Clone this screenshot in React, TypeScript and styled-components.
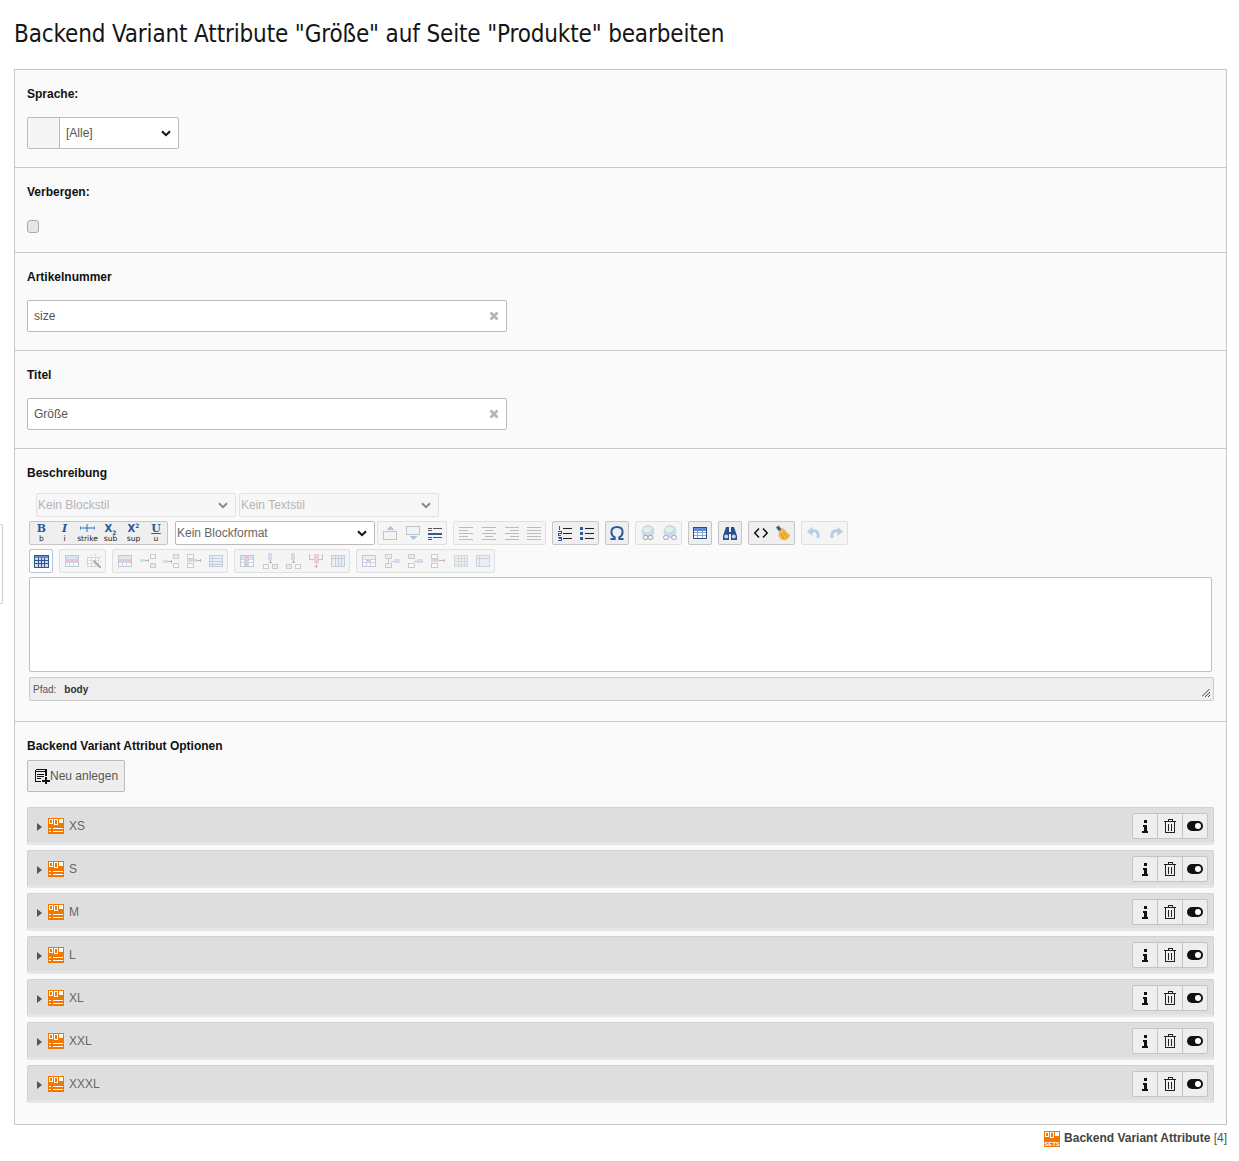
import React from "react";
import styled, { createGlobalStyle } from "styled-components";

const GlobalStyle = createGlobalStyle`
  html, body { margin: 0; padding: 0; background: #fff; }
  body { font-family: "Liberation Sans", Arial, sans-serif; font-size: 12px; color: #333; }
`;

const chevron = (color: string) =>
  `url("data:image/svg+xml,%3Csvg xmlns='http://www.w3.org/2000/svg' width='10' height='7'%3E%3Cpath d='M1 1.2l4 4 4-4' fill='none' stroke='%23${color}' stroke-width='2'/%3E%3C/svg%3E")`;

const Page = styled.div`
  position: relative;
  height: 1161px;
  padding: 0 12px 0 14px;
  box-sizing: border-box;
`;

const SideTab = styled.div`
  position: absolute;
  left: 0;
  top: 524px;
  width: 3px;
  height: 80px;
  background: #fff;
  border: 1px solid #ccc;
  border-left: 0;
  border-radius: 0 2px 2px 0;
  box-sizing: border-box;
`;

const Title = styled.h1`
  margin: 0;
  height: 69px;
  font-family: "DejaVu Sans Condensed", "Liberation Sans", sans-serif;
  font-weight: 400;
  font-size: 24px;
  line-height: 69px;
  letter-spacing: -0.14px;
  color: #151515;
  white-space: nowrap;
`;

const Panel = styled.div`
  border: 1px solid #c8c8c8;
  background: #fafafa;
  height: 1056px;
  box-sizing: border-box;
`;

const Section = styled.section<{ $last?: boolean }>`
  padding: 16px 12px 18px;
  border-bottom: ${(p) => (p.$last ? "0" : "1px solid #c8c8c8")};
`;

const Label = styled.label<{ $gap?: number }>`
  display: block;
  font-weight: 700;
  line-height: 16px;
  color: #111;
  margin-bottom: ${(p) => p.$gap ?? 15}px;
`;

const LangField = styled.div`
  display: flex;
  width: 152px;
  height: 32px;
  border: 1px solid #bbb;
  border-radius: 2px;
  box-sizing: border-box;
  background: #fff;
`;

const LangFlag = styled.div`
  width: 31px;
  background: #f5f5f5;
  border-right: 1px solid #bbb;
`;

const LangSelect = styled.select`
  flex: 1;
  min-width: 0;
  border: 0;
  outline: 0;
  appearance: none;
  background: ${chevron("111")} no-repeat right 7px center;
  font: 12px "Liberation Sans", sans-serif;
  color: #555;
  padding-left: 6px;
`;

const CheckRow = styled.div`
  height: 19px;
  padding-top: 5px;
  box-sizing: border-box;
`;

const Check = styled.input`
  display: block;
  appearance: none;
  width: 12px;
  height: 13px;
  margin: 0;
  box-sizing: border-box;
  background: #e6e6e6;
  border: 1px solid #aaa;
  border-radius: 3px;
`;

const TextField = styled.div`
  position: relative;
  width: 480px;
  height: 32px;
  border: 1px solid #bbb;
  border-radius: 2px;
  box-sizing: border-box;
  background: #fff;
  display: flex;
  align-items: center;
  padding: 0 6px;
  color: #555;
`;

const Clear = styled.svg`
  position: absolute;
  right: 7px;
  top: 10px;
`;

const Editor = styled.div`
  margin-top: -3px;
  padding-bottom: 2px;
`;

const StyleRow = styled.div`
  display: flex;
  gap: 3px;
  padding-left: 9px;
  margin-bottom: 4px;
`;

const StyleSelect = styled.select`
  appearance: none;
  width: 200px;
  height: 24px;
  box-sizing: border-box;
  border: 1px solid #e3e3e3;
  border-radius: 2px;
  background: #f7f7f7 ${chevron("888")} no-repeat right 7px center;
  color: #b5b5b5;
  font: 12px "Liberation Sans", sans-serif;
  padding: 0 0 0 1px;
  opacity: 1;
`;

const FormatSelect = styled(StyleSelect)`
  border-color: #bbb;
  background: #fff ${chevron("111")} no-repeat right 7px center;
  color: #666;
  margin: 0 -4px 0 1px;
`;

const ToolRow = styled.div`
  display: flex;
  gap: 6px;
  padding-left: 2px;
  margin-bottom: 4px;
`;

const Group = styled.div<{ $faded?: boolean; $active?: boolean }>`
  display: flex;
  height: 24px;
  box-sizing: border-box;
  border: 1px solid ${(p) => (p.$active ? "#b9c4d6" : p.$faded ? "#e0e0e0" : "#c6c6c6")};
  border-radius: 2px;
  background: ${(p) => (p.$active ? "#fff" : p.$faded ? "#f5f5f5" : "#efefef")};
  & > *:last-child {
    width: 22px;
  }
`;

const Tool = styled.div<{ $dim?: boolean }>`
  width: 23px;
  box-sizing: border-box;
  display: flex;
  align-items: center;
  justify-content: center;
  & > svg {
    opacity: ${(p) => (p.$dim ? 0.45 : 1)};
  }
`;

const TextTool = styled.div`
  width: 23px;
  display: flex;
  flex-direction: column;
  align-items: center;
`;

const TextToolMark = styled.span`
  font: 700 11px/13px "DejaVu Serif", serif;
  color: #2a5a98;
  height: 13px;
  white-space: nowrap;
`;

const TextToolItalic = styled(TextToolMark)`
  font-style: italic;
`;

const TextToolUnder = styled(TextToolMark)`
  text-decoration: underline;
`;

const TextToolLetter = styled(TextToolMark)`
  font-family: "DejaVu Sans", sans-serif;
  font-size: 10px;
  sub, sup {
    font-size: 6px;
    line-height: 0;
  }
`;

const StrikeMark = styled.svg`
  display: block;
  margin-bottom: 3px;
  margin-top: 2px;
`;

const TextToolName = styled.span`
  font: 7.5px/8px "DejaVu Sans", sans-serif;
  color: #222;
`;

const EditArea = styled.div`
  margin-left: 2px;
  width: 1183px;
  height: 95px;
  border: 1px solid #c0c0c0;
  border-radius: 2px;
  background: #fff;
  box-sizing: border-box;
`;

const PathBar = styled.div`
  position: relative;
  margin: 5px 0 0 2px;
  width: 1185px;
  height: 24px;
  border: 1px solid #ccc;
  border-radius: 2px;
  background: #eee;
  box-sizing: border-box;
  display: flex;
  align-items: center;
  gap: 8px;
  padding-left: 3px;
  font-size: 10px;
  color: #555;
  b { color: #333; }
`;

const Grip = styled.svg`
  position: absolute;
  right: 3px;
  bottom: 3px;
`;

const NewButton = styled.button`
  display: flex;
  align-items: center;
  height: 32px;
  width: 98px;
  padding: 0 0 0 6px;
  border: 1px solid #bbb;
  border-radius: 2px;
  background: #eee;
  font: 12px "Liberation Sans", sans-serif;
  color: #555;
  margin-bottom: 15px;
`;

const Rows = styled.div`
  display: flex;
  flex-direction: column;
  gap: 5px;
`;

const Row = styled.div`
  height: 38px;
  box-sizing: border-box;
  display: flex;
  align-items: center;
  background: #dedede;
  border: 1px solid #d2d2d2;
  border-bottom: 3px solid #e6e6e6;
  border-radius: 2px;
  padding: 1px 5px 0 7px;
  color: #666;
`;

const Caret = styled.span`
  width: 0;
  height: 0;
  border-left: 5px solid #555;
  border-top: 4px solid transparent;
  border-bottom: 4px solid transparent;
  margin: 2px 6px 0 2px;
`;

const RowName = styled.span`
  margin-left: 5px;
  flex: 1;
`;

const Actions = styled.div`
  display: flex;
  height: 26px;
  box-sizing: border-box;
  border: 1px solid #c4c4c4;
  border-radius: 2px;
  background: #eee;
`;

const Action = styled.div`
  width: 24px;
  display: flex;
  align-items: center;
  justify-content: center;
  & + & { border-left: 1px solid #c4c4c4; }
`;

const Footer = styled.div`
  display: flex;
  justify-content: flex-end;
  align-items: center;
  gap: 4px;
  height: 16px;
  margin-top: 6px;
  color: #555;
  b { color: #444; }
`;

const FooterText = styled.span`
  margin-bottom: 2px;
`;

const BLUE = "#2c5a9a";

const Sv = ({ children }: { children: React.ReactNode }) => (
  <svg width={16} height={16} viewBox="0 0 16 16" fill="none" shapeRendering="crispEdges">
    {children}
  </svg>
);

const Grid = ({ pink, head = "#b9cdea" }: { pink?: string; head?: string }) => (
  <>
    <rect x="1.5" y="2.5" width="13" height="11" fill="#fff" stroke="#7c95b8" />
    <rect x="2" y="3" width="12" height="3" fill={head} />
    {pink === "cell" && <rect x="6" y="6" width="4" height="4" fill="#e58a9a" />}
    {pink === "row" && <rect x="2" y="7" width="12" height="3" fill="#e58a9a" />}
    {pink === "col" && <rect x="6" y="3" width="4" height="10" fill="#e58a9a" />}
    <path d="M2 6.5h12M2 9.5h12M5.5 6v7M9.5 6v7" stroke="#9fb2cc" />
  </>
);

const Globe = ({ gap }: { gap: number }) => (
  <g shapeRendering="auto">
    <circle cx="8" cy="6.5" r="6.5" fill="#8fbde0" />
    <path d="M3 4.5c2-3 6-3 8-1.5 1 3-2 5-6 4z" fill="#d8ecd0" />
    <rect x={3 - gap} y="10.5" width="5" height="4" rx="2" fill="#f5f5f5" stroke="#444" />
    <rect x={8 + gap} y="10.5" width="5" height="4" rx="2" fill="#f5f5f5" stroke="#444" />
  </g>
);

const icons: Record<string, React.ReactNode> = {
  blockUp: (<><rect x="1.5" y="6.5" width="13" height="8" fill="#f2f2f2" stroke="#888" /><path d="M8 1l4 4H4z" fill="#5a8ac6" /></>),
  blockDown: (<><rect x="1.5" y="1.5" width="13" height="8" fill="#f2f2f2" stroke="#888" /><path d="M8 15l4-4H4z" fill="#5a8ac6" /></>),
  lineHeight: (<><path d="M1 3.5h4M1 5.5h4M6 3.5h9M1 12.5h4M1 14.5h4M6 12.5h9" stroke="#555" /><rect x="1" y="7.5" width="14" height="2" fill="#2c5a9a" /></>),
  left: <path d="M1 2.5h14M1 5.5h9M1 8.5h14M1 11.5h9M1 14.5h14" stroke="#777" />,
  center: <path d="M1 2.5h14M4 5.5h8M1 8.5h14M4 11.5h8M1 14.5h14" stroke="#777" />,
  right: <path d="M1 2.5h14M6 5.5h9M1 8.5h14M6 11.5h9M1 14.5h14" stroke="#777" />,
  justify: <path d="M1 2.5h14M1 5.5h14M1 8.5h14M1 11.5h14M1 14.5h14" stroke="#777" />,
  ol: (<><path d="M6 3.5h9M6 8.5h9M6 13.5h9" stroke="#222" /><path d="M2.5 1v4M1 6.5h3V8H1v2.5h3M1 12h3v3.5H1M2 13.5h2" stroke="#2c5a9a" /></>),
  ul: (<><path d="M6 3.5h9M6 8.5h9M6 13.5h9" stroke="#222" /><rect x="1" y="2" width="3" height="3" fill="#2c5a9a" /><rect x="1" y="7" width="3" height="3" fill="#2c5a9a" /><rect x="1" y="12" width="3" height="3" fill="#2c5a9a" /></>),
  omega: <path d="M1.5 14h4.2v-1.6C3.5 11.2 2.4 9.2 2.4 7c0-3.2 2.4-5 5.6-5s5.6 1.8 5.6 5c0 2.2-1.1 4.2-3.3 5.4V14h4.2" stroke={BLUE} strokeWidth="2" shapeRendering="auto" />,
  link: <Globe gap={0} />,
  unlink: <Globe gap={1.5} />,
  table: (<><rect x="1.5" y="2.5" width="13" height="11" fill="#fff" stroke="#2f4f82" /><rect x="2" y="3" width="12" height="2.5" fill="#5f8bd0" /><path d="M2 7.5h12M2 10.5h12M5.5 6v7M10.5 6v7" stroke="#8ea6c8" /></>),
  find: (<g shapeRendering="auto"><path d="M3 5l1-3h3v5h2V2h3l1 3 2 6v4H9V9H7v6H1v-4z" fill="#27508c" /><circle cx="4.2" cy="11.5" r="2" fill="#c6d8ee" /><circle cx="11.8" cy="11.5" r="2" fill="#c6d8ee" /></g>),
  code: <path d="M6 3.5L1.8 8 6 12.5M10 3.5L14.2 8 10 12.5" stroke="#111" strokeWidth="1.5" shapeRendering="auto" />,
  clean: (<g shapeRendering="auto"><path d="M1 2.5L3.5.5l3.5 4L4.5 7z" fill="#3f5f8e" /><path d="M4 6l4-3 7.5 7.5L11 15.5 6 14.5 3.5 11z" fill="#f2b84a" /><path d="M6 9l3 5M8.5 7.5l4 5" stroke="#c98a1c" /></g>),
  undo: (<g shapeRendering="auto"><path d="M5 6.5c4-2 8-.5 7 6.5" stroke="#6f9ed0" strokeWidth="3" /><path d="M1 6.5L6.5 2v9z" fill="#6f9ed0" /></g>),
  redo: (<g shapeRendering="auto"><path d="M11 6.5c-4-2-8-.5-7 6.5" stroke="#6f9ed0" strokeWidth="3" /><path d="M15 6.5L9.5 2v9z" fill="#6f9ed0" /></g>),
  tableActive: (<><rect x="1.5" y="2.5" width="14" height="12" fill="#cfdcf0" stroke="#33568c" /><rect x="2" y="3" width="13" height="2" fill="#5f8bd0" /><path d="M2 7.5h13M2 10.5h13M5.5 5v9M8.5 5v9M11.5 5v9" stroke="#33568c" /></>),
  tableProps: <Grid pink="row" />,
  wand: (<><rect x="1.5" y="4.5" width="11" height="9" fill="#fff" stroke="#aaa" /><path d="M2 7.5h10M2 10.5h10M5.5 5v8M9.5 5v8" stroke="#bbb" /><path d="M8 8l7 7" stroke="#555" strokeWidth="2" /><path d="M9 1h1v2H9zM14 3h1v2h-1zM5 2h1v1H5zM14 8h1v1h-1z" fill="#e8a020" /></>),
  rowProps: <Grid pink="row" head="#d8d8d8" />,
  rowBefore: (<><rect x="10.5" y="1.5" width="5" height="4" fill="#fff" stroke="#999" /><rect x="10.5" y="10.5" width="5" height="4" fill="#ddd" stroke="#999" /><rect x="0" y="6" width="5" height="3" fill="#a9c2e2" /><path d="M5 7.5h4M8 6v3" stroke="#666" /></>),
  rowAfter: (<><rect x="10.5" y="1.5" width="5" height="4" fill="#ddd" stroke="#999" /><rect x="10.5" y="10.5" width="5" height="4" fill="#fff" stroke="#999" /><rect x="0" y="7" width="5" height="3" fill="#a9c2e2" /><path d="M5 8.5h4M8 7v3" stroke="#666" /></>),
  rowDelete: (<><rect x="1.5" y="1.5" width="6" height="4" fill="#fff" stroke="#999" /><rect x="1.5" y="10.5" width="6" height="4" fill="#fff" stroke="#999" /><rect x="1" y="6" width="10" height="3" fill="#e5a0ae" /><path d="M11 7.5h4M14 6v3" stroke="#666" /></>),
  rows: (<><rect x="1.5" y="2.5" width="13" height="11" fill="#dbe6f4" stroke="#8aa2c4" /><path d="M2 5.5h12M2 8.5h12M2 11.5h12M4.5 3v10" stroke="#8aa2c4" /></>),
  colProps: <Grid pink="col" />,
  colBefore: (<><rect x="6" y="0" width="4" height="7" fill="#a9c2e2" /><path d="M8 7v3M6.5 9h3" stroke="#666" /><rect x="1.5" y="11.5" width="5" height="4" fill="#fff" stroke="#999" /><rect x="10.5" y="11.5" width="5" height="4" fill="#ddd" stroke="#999" /></>),
  colAfter: (<><rect x="6" y="0" width="4" height="7" fill="#a9c2e2" /><path d="M8 7v3M6.5 9h3" stroke="#666" /><rect x="1.5" y="11.5" width="5" height="4" fill="#ddd" stroke="#999" /><rect x="10.5" y="11.5" width="5" height="4" fill="#fff" stroke="#999" /></>),
  colDelete: (<><rect x="5.5" y="1" width="5" height="9" fill="#e5a0ae" /><path d="M1.5 1v5h4M14.5 1v5h-4M8 10v5M6 13h4" stroke="#888" /></>),
  cols: (<><rect x="1.5" y="2.5" width="13" height="11" fill="#dbe6f4" stroke="#8aa2c4" /><path d="M5.5 3v10M8.5 3v10M11.5 3v10M2 5.5h12" stroke="#8aa2c4" /></>),
  cell: <Grid pink="cell" head="#e6e6e6" />,
  split: (<><rect x="1.5" y="1.5" width="6" height="4" fill="#eee" stroke="#999" /><rect x="1.5" y="10.5" width="6" height="4" fill="#eee" stroke="#999" /><path d="M4 6v4M7 8h3" stroke="#888" /><rect x="10" y="6" width="6" height="4" fill="#a9c2e2" /></>),
  merge: (<><rect x="1.5" y="1.5" width="6" height="4" fill="#ddd" stroke="#999" /><rect x="1.5" y="10.5" width="6" height="4" fill="#fff" stroke="#999" /><path d="M7 8h3" stroke="#888" /><rect x="10" y="6" width="6" height="4" fill="#a9c2e2" /></>),
  cellDelete: (<><rect x="1.5" y="1.5" width="6" height="4" fill="#fff" stroke="#999" /><rect x="1.5" y="10.5" width="6" height="4" fill="#fff" stroke="#999" /><rect x="1" y="6" width="8" height="3" fill="#e5a0ae" /><path d="M9 7.5h6M14 6v3" stroke="#777" /></>),
  plainGrid: (<><rect x="1.5" y="2.5" width="13" height="11" fill="#eee" stroke="#9bb" /><path d="M2 5.5h12M2 8.5h12M2 11.5h12M5.5 3v10M8.5 3v10M11.5 3v10" stroke="#a8b8cc" /></>),
  cellFill: (<><rect x="1.5" y="2.5" width="13" height="11" fill="#dbe6f4" stroke="#9ab0cc" /><path d="M2 5.5h12M4.5 3v10" stroke="#9ab0cc" /></>),
};

const ToolGroup = ({ names, faded, active, bright }: { names: string[]; faded?: boolean; active?: boolean; bright?: string }) => (
  <Group $faded={faded} $active={active}>
    {names.map((n) => (
      <Tool key={n} $dim={faded && n !== bright}>
        <Sv>{icons[n]}</Sv>
      </Tool>
    ))}
  </Group>
);

const SetIcon = ({ sets }: { sets?: boolean }) => (
  <Sv>
    <rect width="16" height="16" fill="#f07800" />
    <rect x="1.5" y="1.5" width="3" height="4" fill="#f07800" stroke="#fff" />
    <rect x="6.5" y="1.5" width="3" height="5" fill="#f07800" stroke="#fff" />
    <rect x="11" y="1" width="4" height="4" fill="#fff" />
    {sets ? (
      <text x="8" y="14.5" textAnchor="middle" fontSize="6" fontWeight="700" fill="#fff" fontFamily="Liberation Sans, sans-serif">SETS</text>
    ) : (
      <path d="M1 10.5h2M1 13.5h2M5 10.5h10M5 13.5h10" stroke="#fff" strokeWidth="1.4" />
    )}
  </Sv>
);

const InfoIcon = () => (
  <Sv>
    <rect x="6.5" y="2" width="3" height="3" fill="#111" />
    <path d="M5.5 7h4v6H11v2H5v-2h1.5V9h-1z" fill="#111" />
  </Sv>
);

const TrashIcon = () => (
  <Sv>
    <path d="M2 3.5h12M6 3.5v-2h4v2M3.5 3.5v11h9v-11M6.5 6v6.5M9.5 6v6.5" stroke="#222" />
  </Sv>
);

const ToggleIcon = () => (
  <svg width="16" height="10" viewBox="0 0 16 10">
    <rect width="16" height="10" rx="5" fill="#111" />
    <circle cx="11" cy="5" r="3" fill="#fff" />
  </svg>
);

const NewIcon = () => (
  <Sv>
    <path d="M1.5 1.5H12v6M1.5 1.5v12h5" stroke="#111" strokeWidth="1.4" />
    <path d="M1.5 3.5H12M3 6.5h7M3 8.5h7M3 10.5h4" stroke="#111" />
    <path d="M8 12.5h8M12 8.500v7" stroke="#111" strokeWidth="2" />
  </Sv>
);

const ClearIcon = () => (
  <Clear width="10" height="10" viewBox="0 0 10 10">
    <path d="M1.5 1.5l7 7M8.5 1.5l-7 7" stroke="#b5b5b5" strokeWidth="2.8" />
  </Clear>
);

const options = ["XS", "S", "M", "L", "XL", "XXL", "XXXL"];

export default function App() {
  return (
    <Page>
      <GlobalStyle />
      <SideTab />
      <Title>Backend Variant Attribute "Größe" auf Seite "Produkte" bearbeiten</Title>
      <Panel>
        <Section>
          <Label>Sprache:</Label>
          <LangField>
            <LangFlag />
            <LangSelect defaultValue="all">
              <option value="all">[Alle]</option>
            </LangSelect>
          </LangField>
        </Section>
        <Section>
          <Label>Verbergen:</Label>
          <CheckRow>
            <Check type="checkbox" />
          </CheckRow>
        </Section>
        <Section>
          <Label>Artikelnummer</Label>
          <TextField>
            size
            <ClearIcon />
          </TextField>
        </Section>
        <Section>
          <Label>Titel</Label>
          <TextField>
            Größe
            <ClearIcon />
          </TextField>
        </Section>
        <Section>
          <Label>Beschreibung</Label>
          <Editor>
            <StyleRow>
              <StyleSelect disabled>
                <option>Kein Blockstil</option>
              </StyleSelect>
              <StyleSelect disabled>
                <option>Kein Textstil</option>
              </StyleSelect>
            </StyleRow>
            <ToolRow>
              <Group>
                <TextTool>
                  <TextToolMark>B</TextToolMark>
                  <TextToolName>b</TextToolName>
                </TextTool>
                <TextTool>
                  <TextToolItalic>I</TextToolItalic>
                  <TextToolName>i</TextToolName>
                </TextTool>
                <TextTool>
                  <StrikeMark width="15" height="8" viewBox="0 0 15 8">
                    <path d="M0 4h15M0 2v4M15 2v4M7 0v8" stroke="#2a6fb8" fill="none" />
                  </StrikeMark>
                  <TextToolName>strike</TextToolName>
                </TextTool>
                <TextTool>
                  <TextToolLetter>X<sub>2</sub></TextToolLetter>
                  <TextToolName>sub</TextToolName>
                </TextTool>
                <TextTool>
                  <TextToolLetter>X<sup>2</sup></TextToolLetter>
                  <TextToolName>sup</TextToolName>
                </TextTool>
                <TextTool>
                  <TextToolUnder>U</TextToolUnder>
                  <TextToolName>u</TextToolName>
                </TextTool>
              </Group>
              <FormatSelect>
                <option>Kein Blockformat</option>
              </FormatSelect>
              <ToolGroup faded bright="lineHeight" names={["blockUp", "blockDown", "lineHeight"]} />
              <ToolGroup faded names={["left", "center", "right", "justify"]} />
              <ToolGroup names={["ol", "ul"]} />
              <ToolGroup names={["omega"]} />
              <ToolGroup faded names={["link", "unlink"]} />
              <ToolGroup names={["table"]} />
              <ToolGroup names={["find"]} />
              <ToolGroup names={["code", "clean"]} />
              <ToolGroup faded names={["undo", "redo"]} />
            </ToolRow>
            <ToolRow>
              <ToolGroup active names={["tableActive"]} />
              <ToolGroup faded names={["tableProps", "wand"]} />
              <ToolGroup faded names={["rowProps", "rowBefore", "rowAfter", "rowDelete", "rows"]} />
              <ToolGroup faded names={["colProps", "colBefore", "colAfter", "colDelete", "cols"]} />
              <ToolGroup faded names={["cell", "split", "merge", "cellDelete", "plainGrid", "cellFill"]} />
            </ToolRow>
            <EditArea />
            <PathBar>
              Pfad: <b>body</b>
              <Grip width="8" height="8" viewBox="0 0 8 8">
                <path d="M0 7.5L7.5 0M3 8l5-5M6 8l2-2" stroke="#444" fill="none" />
              </Grip>
            </PathBar>
          </Editor>
        </Section>
        <Section $last>
          <Label $gap={6}>Backend Variant Attribut Optionen</Label>
          <NewButton>
            <NewIcon />
            Neu anlegen
          </NewButton>
          <Rows>
            {options.map((o) => (
              <Row key={o}>
                <Caret />
                <SetIcon />
                <RowName>{o}</RowName>
                <Actions>
                  <Action><InfoIcon /></Action>
                  <Action><TrashIcon /></Action>
                  <Action><ToggleIcon /></Action>
                </Actions>
              </Row>
            ))}
          </Rows>
        </Section>
      </Panel>
      <Footer>
        <SetIcon sets />
        <FooterText><b>Backend Variant Attribute</b> [4]</FooterText>
      </Footer>
    </Page>
  );
}
